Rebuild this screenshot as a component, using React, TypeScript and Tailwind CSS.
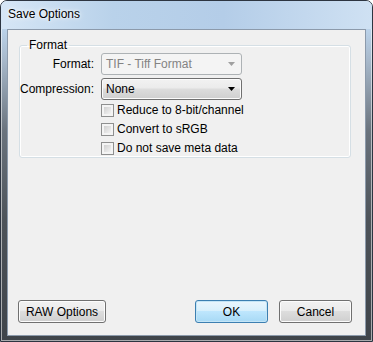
import React from "react";

const font = "font-['Segoe_UI','Liberation_Sans',sans-serif]";

function Checkbox({ label }: { label: string }) {
  return (
    <div className="flex h-[13px] items-center">
      <div className="h-[13px] w-[13px] border border-[#8e8f8f] bg-[#f4f4f4] p-[1px]">
        <div className="h-full w-full border border-[#f4f4f4] bg-[linear-gradient(135deg,#d0d0d0,#f3f3f3)]" />
      </div>
      <span className="ml-[3px] text-[12px] leading-[13px] text-black">{label}</span>
    </div>
  );
}

function Button({ label, def, w }: { label: string; def?: boolean; w: string }) {
  return (
    <div
      className={
        "flex h-[23px] items-center justify-center rounded-[3px] border text-[12px] text-black " +
        w +
        (def
          ? " border-[#3c7fb1] bg-[linear-gradient(to_bottom,#eaf6fd_0%,#d9f0fc_45%,#bee6fd_50%,#a7d9f5_100%)] shadow-[inset_0_0_0_1px_#c4e5f6]"
          : " border-[#707070] bg-[linear-gradient(to_bottom,#f2f2f2_0%,#ebebeb_45%,#dddddd_50%,#cfcfcf_100%)] shadow-[inset_0_0_0_1px_#fcfcfc]")
      }
    >
      {label}
    </div>
  );
}

export default function App() {
  return (
    <div className={"bg-white w-[373px] h-[342px] " + font}>
      <div className="flex h-[342px] w-[373px] flex-col rounded-t-[7px] border border-[#2d3541] bg-[linear-gradient(to_bottom,#cfe0f2_0px,#bcd3ea_28px,#a7b8ca_60px,#6a737d_130px,#4d5359_220px,#3f444a_100%)] shadow-[inset_0_0_0_1px_rgba(255,255,255,0.55)]">
        <div className="flex h-[28px] shrink-0 items-center bg-[linear-gradient(to_right,#d6e6f6_0%,#b9d2ea_30%,#b4cde8_60%,#cfe1f3_100%)] rounded-t-[6px] pl-[7px] pb-[2px]">
          <span className="text-[12px] leading-[15px] text-black [text-shadow:0_0_6px_#ffffff,0_0_3px_#ffffff]">
            Save Options
          </span>
        </div>
        <div className="mx-[6px] mb-[5px] flex flex-1 flex-col border border-[#8c9aab] bg-[#f0f0f0]">
          <div className="flex-1">
            <fieldset className="ml-[11px] mr-[14px] mt-[8px] rounded-[3px] border border-[#d5dfe5] pb-[2px] shadow-[inset_0_0_0_1px_#ffffff]">
              <legend className="ml-[7px] px-[2px] text-[12px] leading-[15px] text-black">Format</legend>
              <div className="flex h-[22px] items-center">
                <div className="w-[74px] text-right text-[12px] text-black">Format:</div>
                <div className="ml-[7px] flex h-[22px] w-[141px] items-center justify-between rounded-[3px] border border-[#adb2b5] bg-[#f4f4f4] pl-[4px] pr-[6px] text-[12px] text-[#838383]">
                  <span>TIF - Tiff Format</span>
                  <svg width="7" height="4" viewBox="0 0 7 4">
                    <path d="M0 0H7L3.5 4Z" fill="#a0a0a0" />
                  </svg>
                </div>
              </div>
              <div className="mt-[3px] flex h-[22px] items-center">
                <div className="w-[74px] text-right text-[12px] text-black">Compression:</div>
                <div className="ml-[7px] flex h-[22px] w-[141px] items-center justify-between rounded-[3px] border border-[#707070] bg-[linear-gradient(to_bottom,#f2f2f2_0%,#ebebeb_45%,#dddddd_50%,#cfcfcf_100%)] pl-[4px] pr-[6px] text-[12px] text-black shadow-[inset_0_0_0_1px_#fcfcfc]">
                  <span>None</span>
                  <svg width="7" height="4" viewBox="0 0 7 4">
                    <path d="M0 0H7L3.5 4Z" fill="#000000" />
                  </svg>
                </div>
              </div>
              <div className="ml-[81px] mt-[4px] flex flex-col gap-[6px]">
                <Checkbox label="Reduce to 8-bit/channel" />
                <Checkbox label="Convert to sRGB" />
                <Checkbox label="Do not save meta data" />
              </div>
            </fieldset>
          </div>
          <div className="flex items-center pb-[12px] pl-[10px] pr-[13px]">
            <Button label="RAW Options" w="w-[88px]" />
            <div className="flex-1" />
            <Button label="OK" def w="w-[73px]" />
            <div className="w-[11px]" />
            <Button label="Cancel" w="w-[73px]" />
          </div>
        </div>
      </div>
    </div>
  );
}
